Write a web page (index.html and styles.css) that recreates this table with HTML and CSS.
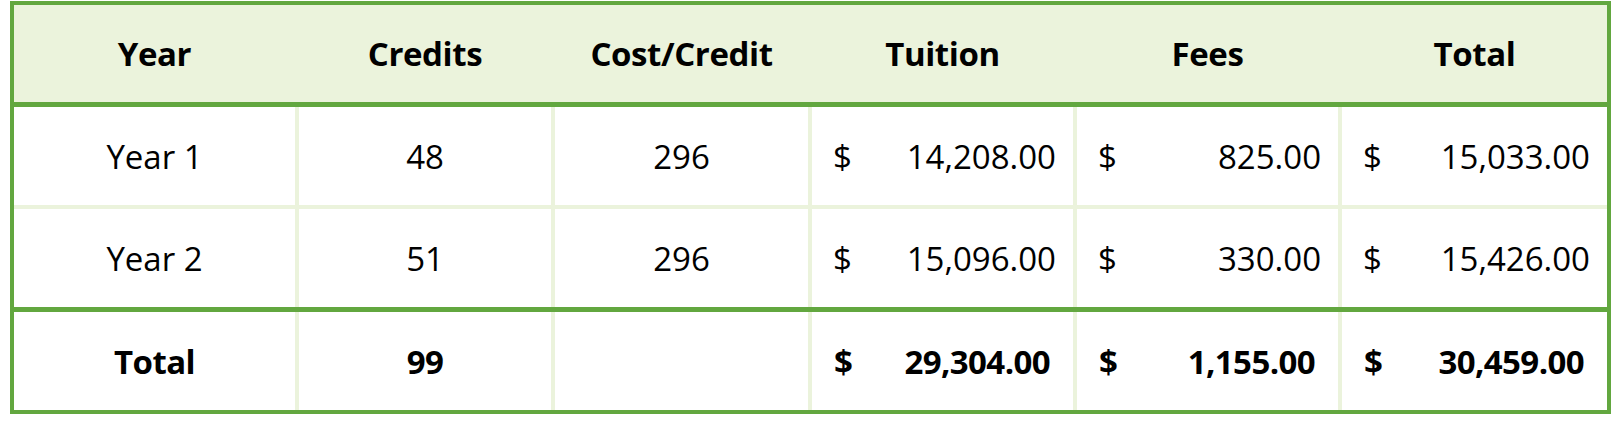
FILE: index.html
```html
<!DOCTYPE html>
<html>
<head>
<meta charset="utf-8">
<link rel="stylesheet" href="styles.css">
</head>
<body>
<div class="table">
  <div class="row head">
    <div class="cell">Year</div>
    <div class="cell">Credits</div>
    <div class="cell">Cost/Credit</div>
    <div class="cell">Tuition</div>
    <div class="cell">Fees</div>
    <div class="cell">Total</div>
  </div>
  <div class="body">
    <div class="row">
      <div class="cell">Year 1</div>
      <div class="cell">48</div>
      <div class="cell">296</div>
      <div class="cell money"><span>$</span><span>14,208.00</span></div>
      <div class="cell money"><span>$</span><span>825.00</span></div>
      <div class="cell money"><span>$</span><span>15,033.00</span></div>
    </div>
    <div class="row">
      <div class="cell">Year 2</div>
      <div class="cell">51</div>
      <div class="cell">296</div>
      <div class="cell money"><span>$</span><span>15,096.00</span></div>
      <div class="cell money"><span>$</span><span>330.00</span></div>
      <div class="cell money"><span>$</span><span>15,426.00</span></div>
    </div>
  </div>
  <div class="row total">
    <div class="cell">Total</div>
    <div class="cell">99</div>
    <div class="cell"></div>
    <div class="cell money"><span>$</span><span>29,304.00</span></div>
    <div class="cell money"><span>$</span><span>1,155.00</span></div>
    <div class="cell money"><span>$</span><span>30,459.00</span></div>
  </div>
</div>
</body>
</html>
```
FILE: styles.css
```css
html, body {
  margin: 0;
  padding: 0;
  background: #ffffff;
}

body {
  font-family: "Open Sans", "Noto Sans", sans-serif;
  color: #000000;
}

.table {
  box-sizing: border-box;
  width: 1601px;
  margin: 1px 0 0 10px;
  border: 4px solid #62a73f;
  background: #ebf3dc;
}

.row {
  display: grid;
  grid-template-columns: 281px 252px 253px 261px 261px 265px;
  column-gap: 4px;
  height: 98px;
}

.cell {
  background: #ffffff;
  display: flex;
  align-items: center;
  justify-content: center;
  font-size: 33px;
  line-height: 1;
}

.money {
  justify-content: space-between;
  padding: 0 17px 0 21px;
}

.head {
  height: 97px;
  border-bottom: 5px solid #62a73f;
}

.head .cell {
  background: #ebf3dc;
  font-weight: 700;
  font-size: 33px;
  letter-spacing: -0.4px;
}

.body {
  display: flex;
  flex-direction: column;
  row-gap: 4px;
}

.total {
  border-top: 5px solid #62a73f;
}

.total .cell {
  font-weight: 700;
  letter-spacing: -0.6px;
}

.total .money {
  padding: 0 23px 0 22px;
}
```
